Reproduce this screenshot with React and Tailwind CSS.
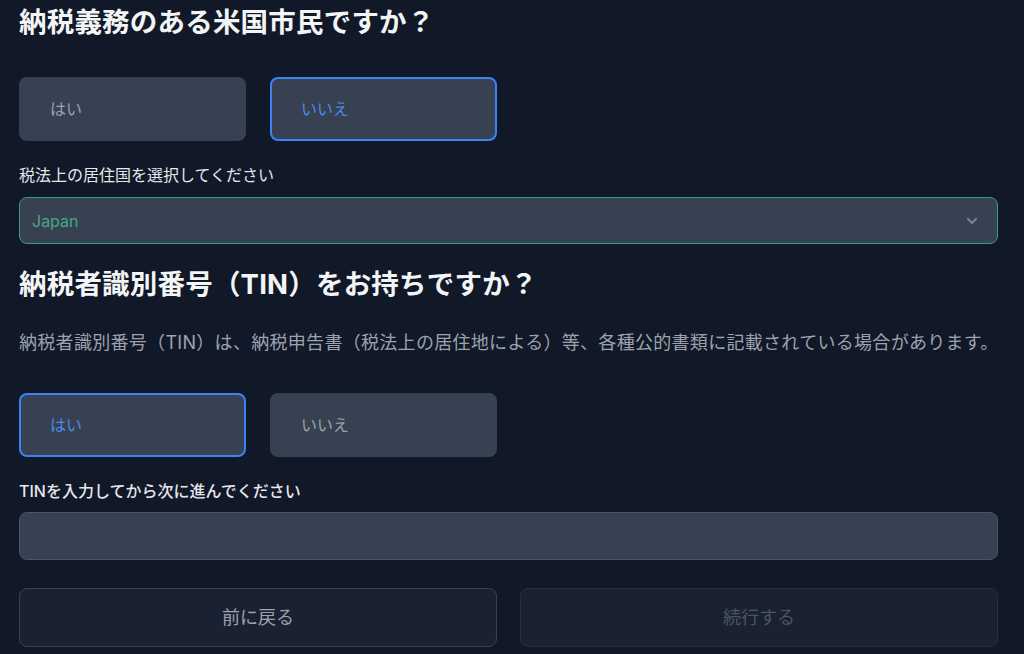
import React from "react";

const font = { fontFamily: '"Inter", "Noto Sans CJK JP", sans-serif' };

function Choice({ label, selected }) {
  return (
    <button
      className={
        "w-[227px] h-[64px] rounded-[8px] bg-[#374151] text-left pl-[29px] text-[16px] border-2 " +
        (selected ? "border-[#3b82f6] text-[#4a8be6]" : "border-transparent text-[#9ca3af]")
      }
    >
      {label}
    </button>
  );
}

export default function App() {
  return (
    <div className="min-h-[654px] w-[1024px] bg-[#111827] overflow-hidden" style={font}>
      <div className="w-[979px] ml-[19px] flex flex-col">
        <h1 className="mt-[4px] h-[36px] leading-[36px] text-[27.5px] tracking-[0.2px] font-bold text-[#f3f4f6]">
          納税義務のある米国市民ですか？
        </h1>
        <div className="mt-[37px] flex gap-[24px]">
          <Choice label="はい" />
          <Choice label="いいえ" selected />
        </div>
        <label className="mt-[22px] h-[24px] leading-[24px] text-[16px] text-[#e5e7eb]">
          税法上の居住国を選択してください
        </label>
        <div className="mt-[10px] h-[47px] rounded-[8px] border border-[#34a07e] bg-[#374151] flex items-center justify-between pl-[12px] pr-[17px]">
          <span className="text-[16px] text-[#48a886]">Japan</span>
          <svg width="16" height="16" viewBox="0 0 24 24" fill="none" stroke="#7b8494" strokeWidth="3" strokeLinecap="round" strokeLinejoin="round">
            <path d="M6 9l6 6 6-6" />
          </svg>
        </div>
        <h2 className="mt-[22px] h-[36px] leading-[36px] text-[27.5px] tracking-[0.2px] font-bold text-[#f3f4f6]">
          納税者識別番号（TIN）をお持ちですか？
        </h2>
        <p className="mt-[27px] h-[27px] leading-[27px] text-[18px] tracking-[0.3px] text-[#9ca3af] whitespace-nowrap">
          納税者識別番号（TIN）は、納税申告書（税法上の居住地による）等、各種公的書類に記載されている場合があります。
        </p>
        <div className="mt-[37px] flex gap-[24px]">
          <Choice label="はい" selected />
          <Choice label="いいえ" />
        </div>
        <label className="mt-[22px] h-[24px] leading-[24px] text-[16px] text-[#e5e7eb] font-medium">
          TINを入力してから次に進んでください
        </label>
        <input
          className="mt-[9px] h-[48px] rounded-[8px] border border-[#4b5563] bg-[#374151] px-[12px] text-[16px] text-white outline-none"
          type="text"
        />
        <div className="mt-[28px] grid grid-cols-2 gap-[23px]">
          <button className="h-[59px] rounded-[8px] border border-[#374151] bg-[#1a2232] text-[18px] text-[#9ca3af]">
            前に戻る
          </button>
          <button className="h-[59px] rounded-[8px] border border-[#263040] bg-[#1a2232] text-[18px] text-[#4b5563]">
            続行する
          </button>
        </div>
      </div>
    </div>
  );
}
